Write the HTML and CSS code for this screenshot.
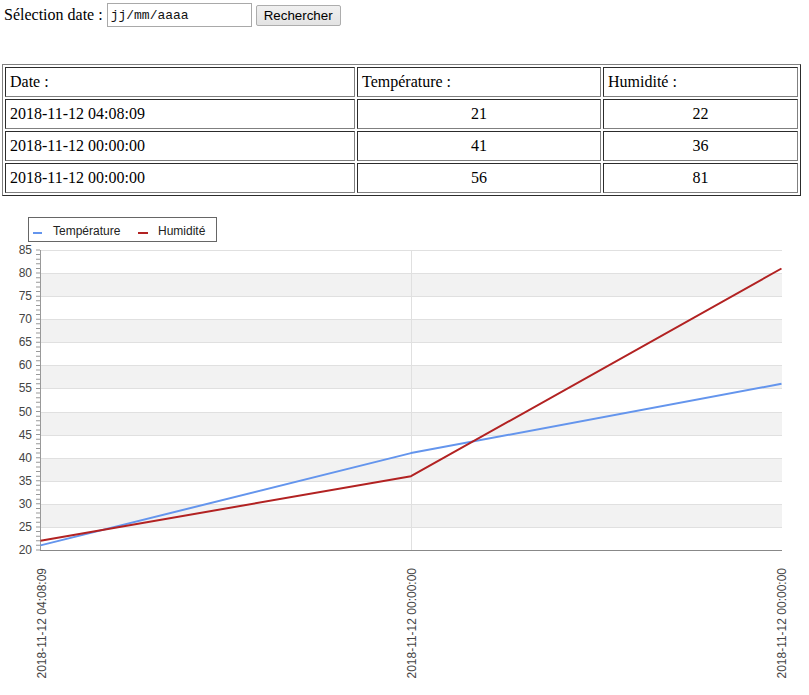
FILE: index.html
```html
<!DOCTYPE html>
<html lang="fr">
<head>
<meta charset="utf-8">
<title>Relevés</title>
<link rel="stylesheet" href="styles.css">
</head>
<body>
<form class="search">
  <label class="search-label" for="date">Sélection date :</label>
  <input class="date-input" id="date" type="text" value="jj/mm/aaaa">
  <button class="search-btn" type="button">Rechercher</button>
</form>

<table class="data">
  <tr>
    <td class="c-date">Date :</td>
    <td class="c-temp">Température :</td>
    <td class="c-hum">Humidité :</td>
  </tr>
  <tr><td>2018-11-12 04:08:09</td><td class="num">21</td><td class="num">22</td></tr>
  <tr><td>2018-11-12 00:00:00</td><td class="num">41</td><td class="num">36</td></tr>
  <tr><td>2018-11-12 00:00:00</td><td class="num">56</td><td class="num">81</td></tr>
</table>

<svg class="chart" width="809" height="490" viewBox="0 0 809 490" xmlns="http://www.w3.org/2000/svg">
  <!-- legend -->
  <rect x="28.5" y="17.5" width="188" height="24" fill="#fff" stroke="#666"/>
  <rect x="33" y="32" width="9" height="2" fill="#6495ed"/>
  <text class="legend" x="53" y="35">Température</text>
  <rect x="138" y="32" width="10" height="2" fill="#b22222"/>
  <text class="legend" x="158" y="35">Humidité</text>

  <!-- bands -->
  <g fill="#f2f2f2">
    <rect x="40" y="73" width="742" height="23"/>
    <rect x="40" y="119" width="742" height="23"/>
    <rect x="40" y="165" width="742" height="23"/>
    <rect x="40" y="212" width="742" height="23"/>
    <rect x="40" y="258" width="742" height="23"/>
    <rect x="40" y="304" width="742" height="23"/>
  </g>
  <!-- gridlines -->
  <g stroke="#e0e0e0" stroke-width="1">
    <line x1="40" x2="782" y1="50.5" y2="50.5"/>
    <line x1="40" x2="782" y1="73.5" y2="73.5"/>
    <line x1="40" x2="782" y1="96.5" y2="96.5"/>
    <line x1="40" x2="782" y1="119.5" y2="119.5"/>
    <line x1="40" x2="782" y1="142.5" y2="142.5"/>
    <line x1="40" x2="782" y1="165.5" y2="165.5"/>
    <line x1="40" x2="782" y1="188.5" y2="188.5"/>
    <line x1="40" x2="782" y1="212.5" y2="212.5"/>
    <line x1="40" x2="782" y1="235.5" y2="235.5"/>
    <line x1="40" x2="782" y1="258.5" y2="258.5"/>
    <line x1="40" x2="782" y1="281.5" y2="281.5"/>
    <line x1="40" x2="782" y1="304.5" y2="304.5"/>
    <line x1="40" x2="782" y1="327.5" y2="327.5"/>
    <line x1="411.5" x2="411.5" y1="50" y2="350"/>
  </g>

  <!-- y axis -->
  <line x1="40.5" x2="40.5" y1="50" y2="350" stroke="#999"/>
  <line x1="38" x2="38" y1="49.5" y2="351" stroke="#999" stroke-width="4" stroke-dasharray="1 3.615"/>
  <line x1="40" x2="782" y1="350.5" y2="350.5" stroke="#888"/>

  <g class="ylab" text-anchor="end">
    <text x="32" y="54">85</text>
    <text x="32" y="77">80</text>
    <text x="32" y="100">75</text>
    <text x="32" y="123">70</text>
    <text x="32" y="146">65</text>
    <text x="32" y="169">60</text>
    <text x="32" y="192">55</text>
    <text x="32" y="216">50</text>
    <text x="32" y="239">45</text>
    <text x="32" y="262">40</text>
    <text x="32" y="285">35</text>
    <text x="32" y="308">30</text>
    <text x="32" y="331">25</text>
    <text x="32" y="354">20</text>
  </g>

  <!-- series -->
  <polyline points="40.5,345.4 411,253.1 781.5,183.8" fill="none" stroke="#6495ed" stroke-width="2" stroke-linejoin="round"/>
  <polyline points="40.5,340.8 411,276.2 781.5,68.5" fill="none" stroke="#b22222" stroke-width="2" stroke-linejoin="round"/>

  <!-- x labels -->
  <g class="xlab" text-anchor="end">
    <text transform="translate(45.5 368) rotate(-90)">2018-11-12 04:08:09</text>
    <text transform="translate(415.5 368) rotate(-90)">2018-11-12 00:00:00</text>
    <text transform="translate(785.5 368) rotate(-90)">2018-11-12 00:00:00</text>
  </g>
</svg>
</body>
</html>
```

FILE: styles.css
```css
html, body {
  margin: 0;
  padding: 0;
  overflow: hidden;
  background: #fff;
}
body {
  font-family: "Liberation Serif", "Times New Roman", serif;
  font-size: 16px;
  color: #000;
}
.search {
  display: flex;
  align-items: center;
  padding: 3px 0 0 4px;
  margin: 0;
  height: 24px;
}
.search-label {
  margin-right: 4px;
}
.date-input {
  box-sizing: border-box;
  width: 145px;
  height: 24px;
  margin: 0;
  padding: 1px 3px;
  border: 1px solid #a9a9a9;
  font-family: "Liberation Mono", "Courier New", monospace;
  font-size: 13px;
  color: #111;
  background: #fff;
}
.search-btn {
  box-sizing: border-box;
  margin: 0 0 0 4px;
  width: 85px;
  height: 21px;
  padding: 0 6px;
  border: 1px solid #adadad;
  border-radius: 2px;
  background: linear-gradient(#f0f0f0, #e3e3e3);
  font-family: "Liberation Sans", Arial, sans-serif;
  font-size: 13.33px;
  color: #000;
}
.data {
  margin: 37px 0 0 2px;
  width: 799px;
  table-layout: fixed;
  border-collapse: separate;
  border-spacing: 2px;
  border: 1px outset #808080;
}
.data td {
  box-sizing: border-box;
  border: 1px inset #808080;
  padding: 5px 4px;
  height: 30px;
  line-height: 18px;
  text-align: left;
}
.data .c-date { width: 350px; }
.data .c-temp { width: 244px; }
.data .c-hum { width: 195px; }
.data td.num { text-align: center; }
.chart {
  display: block;
  margin-top: 4px;
}
.chart .legend {
  font-family: "Liberation Sans", Arial, sans-serif;
  font-size: 12px;
  fill: #222;
}
.chart .ylab text {
  font-family: "Liberation Sans", Arial, sans-serif;
  font-size: 12px;
  fill: #444;
}
.chart .xlab text {
  font-family: "Liberation Sans", Arial, sans-serif;
  font-size: 12px;
  fill: #444;
}
```
